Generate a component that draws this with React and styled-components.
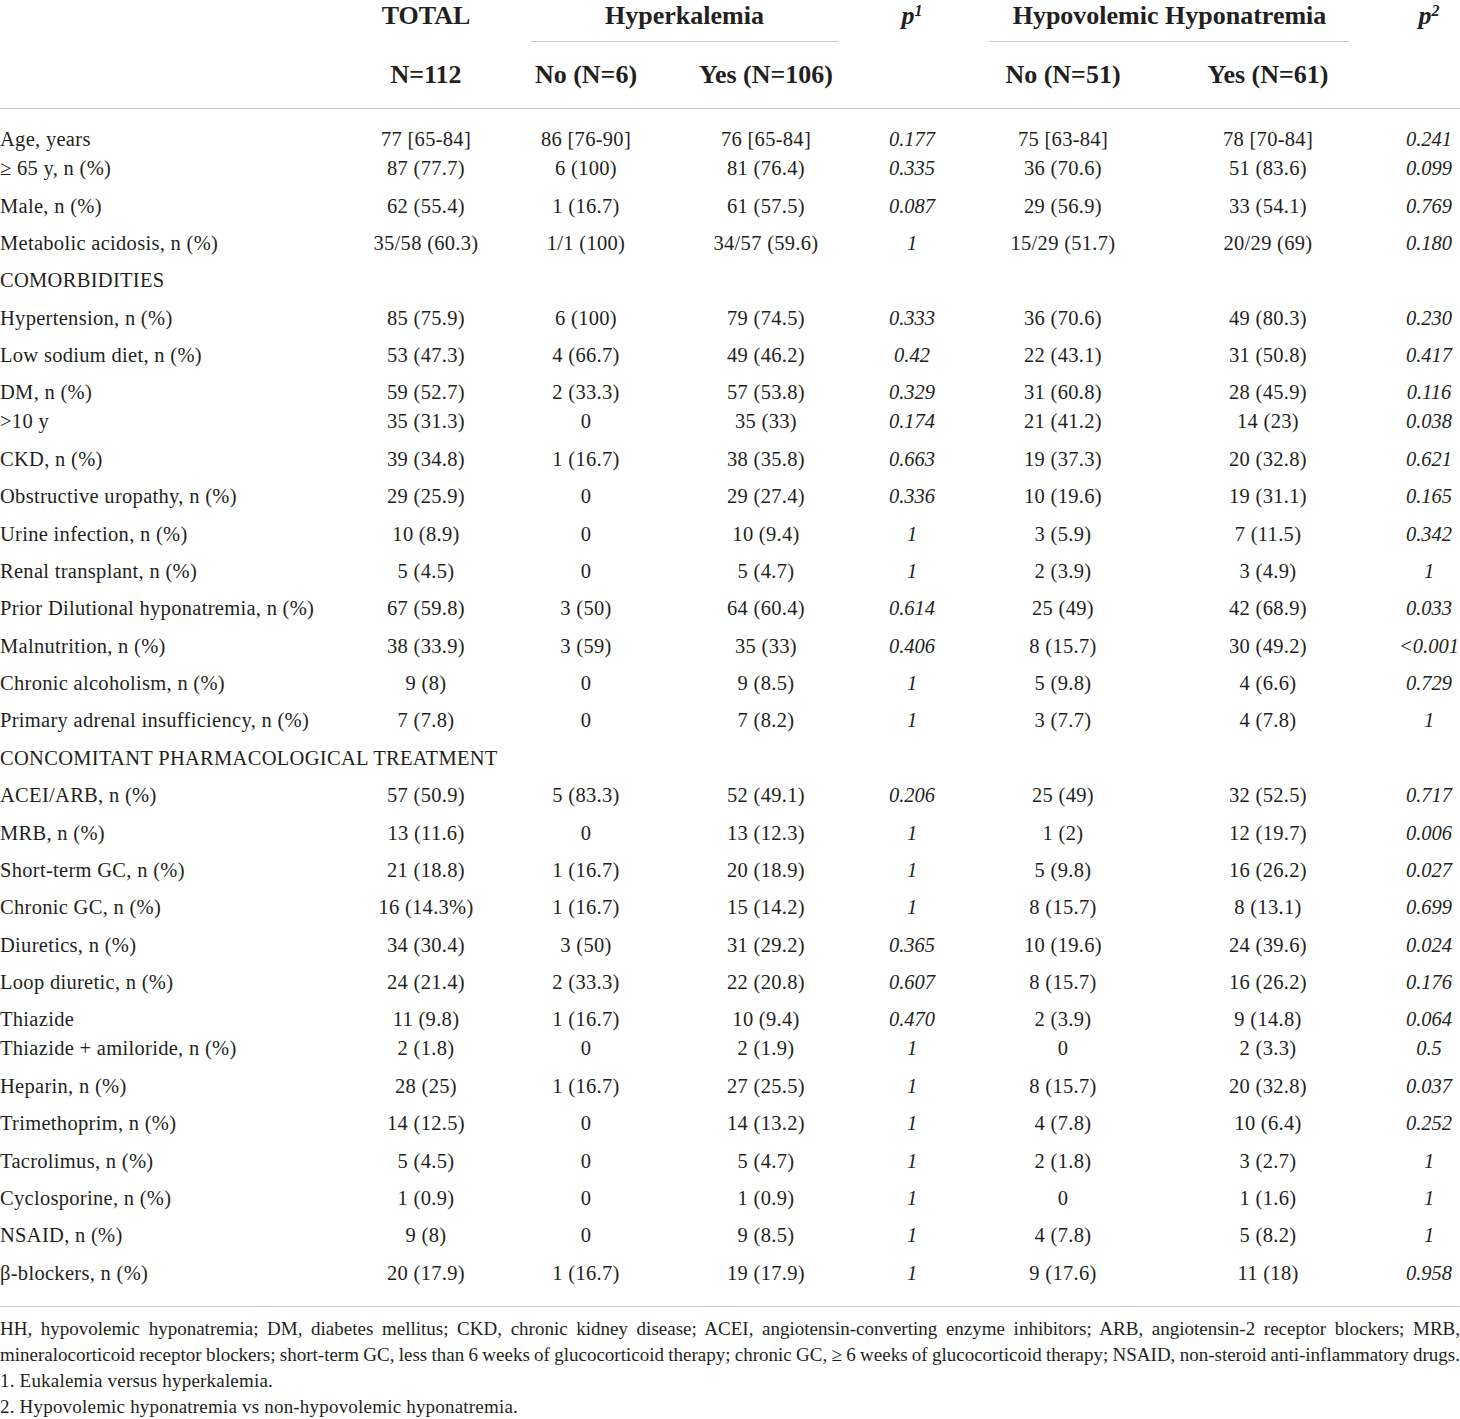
import React from 'react';
import styled, { createGlobalStyle } from 'styled-components';

const GlobalStyle = createGlobalStyle`
  body {
    margin: 0;
    background: #fff;
    color: #231f20;
    font-family: 'Liberation Serif', 'Times New Roman', serif;
  }
`;

const columns = '346px 160px 160px 200px 92px 210px 200px 92px';

const Page = styled.div`
  width: 1460px;
`;

const Head = styled.div`
  display: grid;
  grid-template-columns: ${columns};
  grid-template-rows: 42px 66px;
  border-bottom: 1px solid #c6c6c6;
  font-size: 26px;
  font-weight: bold;
  line-height: 30px;
`;

const HeadCell = styled.div`
  grid-column: ${(p) => p.$col} / span ${(p) => p.$span || 1};
  grid-row: ${(p) => p.$row};
  align-self: ${(p) => (p.$row === 1 ? 'start' : 'center')};
  padding-top: ${(p) => (p.$row === 1 ? '1px' : '0')};
  text-align: center;
  white-space: nowrap;
  padding-left: ${(p) => (p.$col === 8 ? '30px' : '0')};
`;

const Group = styled.div`
  margin: ${(p) => p.$inset};
  height: 40px;
  border-bottom: 1px solid #c6c6c6;
  text-align: center;
`;

const PLabel = styled.span`
  font-style: italic;

  sup {
    font-size: 16px;
    vertical-align: 8px;
    line-height: 0;
  }
`;

const Body = styled.div`
  padding: 12px 0 14px;
  border-bottom: 1px solid #c6c6c6;
  font-size: 20.5px;
  line-height: 29px;
  letter-spacing: 0.3px;
`;

const Row = styled.div`
  display: grid;
  grid-template-columns: ${columns};
  padding-top: ${(p) => (p.$joinTop ? '0' : '4.2px')};
  padding-bottom: ${(p) => (p.$joinBottom ? '0' : '4.2px')};
`;

const Cell = styled.div`
  text-align: center;
  white-space: nowrap;

  &:first-child {
    text-align: left;
  }

  &:nth-child(5),
  &:nth-child(8) {
    font-style: italic;
    letter-spacing: 0;
  }

  &:nth-child(8) {
    padding-left: 30px;
  }
`;

const Section = styled.div`
  grid-column: 1 / -1;
  white-space: nowrap;
`;

const Notes = styled.div`
  margin-top: 9px;
  font-size: 19px;
  line-height: 26px;
`;

const JustLine = styled.div`
  text-align: justify;
  text-align-last: justify;
  white-space: nowrap;
  word-spacing: ${(p) => p.$tight || '0'};
`;

const NoteLine = styled.div`
  letter-spacing: 0.2px;
`;

const rows = [
  ['Age, years', '77 [65-84]', '86 [76-90]', '76 [65-84]', '0.177', '75 [63-84]', '78 [70-84]', '0.241'],
  ['≥ 65 y, n (%)', '87 (77.7)', '6 (100)', '81 (76.4)', '0.335', '36 (70.6)', '51 (83.6)', '0.099', 'join'],
  ['Male, n (%)', '62 (55.4)', '1 (16.7)', '61 (57.5)', '0.087', '29 (56.9)', '33 (54.1)', '0.769'],
  ['Metabolic acidosis, n (%)', '35/58 (60.3)', '1/1 (100)', '34/57 (59.6)', '1', '15/29 (51.7)', '20/29 (69)', '0.180'],
  ['COMORBIDITIES'],
  ['Hypertension, n (%)', '85 (75.9)', '6 (100)', '79 (74.5)', '0.333', '36 (70.6)', '49 (80.3)', '0.230'],
  ['Low sodium diet, n (%)', '53 (47.3)', '4 (66.7)', '49 (46.2)', '0.42', '22 (43.1)', '31 (50.8)', '0.417'],
  ['DM, n (%)', '59 (52.7)', '2 (33.3)', '57 (53.8)', '0.329', '31 (60.8)', '28 (45.9)', '0.116'],
  ['>10 y', '35 (31.3)', '0', '35 (33)', '0.174', '21 (41.2)', '14 (23)', '0.038', 'join'],
  ['CKD, n (%)', '39 (34.8)', '1 (16.7)', '38 (35.8)', '0.663', '19 (37.3)', '20 (32.8)', '0.621'],
  ['Obstructive uropathy, n (%)', '29 (25.9)', '0', '29 (27.4)', '0.336', '10 (19.6)', '19 (31.1)', '0.165'],
  ['Urine infection, n (%)', '10 (8.9)', '0', '10 (9.4)', '1', '3 (5.9)', '7 (11.5)', '0.342'],
  ['Renal transplant, n (%)', '5 (4.5)', '0', '5 (4.7)', '1', '2 (3.9)', '3 (4.9)', '1'],
  ['Prior Dilutional hyponatremia, n (%)', '67 (59.8)', '3 (50)', '64 (60.4)', '0.614', '25 (49)', '42 (68.9)', '0.033'],
  ['Malnutrition, n (%)', '38 (33.9)', '3 (59)', '35 (33)', '0.406', '8 (15.7)', '30 (49.2)', '<0.001'],
  ['Chronic alcoholism, n (%)', '9 (8)', '0', '9 (8.5)', '1', '5 (9.8)', '4 (6.6)', '0.729'],
  ['Primary adrenal insufficiency, n (%)', '7 (7.8)', '0', '7 (8.2)', '1', '3 (7.7)', '4 (7.8)', '1'],
  ['CONCOMITANT PHARMACOLOGICAL TREATMENT'],
  ['ACEI/ARB, n (%)', '57 (50.9)', '5 (83.3)', '52 (49.1)', '0.206', '25 (49)', '32 (52.5)', '0.717'],
  ['MRB, n (%)', '13 (11.6)', '0', '13 (12.3)', '1', '1 (2)', '12 (19.7)', '0.006'],
  ['Short-term GC, n (%)', '21 (18.8)', '1 (16.7)', '20 (18.9)', '1', '5 (9.8)', '16 (26.2)', '0.027'],
  ['Chronic GC, n (%)', '16 (14.3%)', '1 (16.7)', '15 (14.2)', '1', '8 (15.7)', '8 (13.1)', '0.699'],
  ['Diuretics, n (%)', '34 (30.4)', '3 (50)', '31 (29.2)', '0.365', '10 (19.6)', '24 (39.6)', '0.024'],
  ['Loop diuretic, n (%)', '24 (21.4)', '2 (33.3)', '22 (20.8)', '0.607', '8 (15.7)', '16 (26.2)', '0.176'],
  ['Thiazide', '11 (9.8)', '1 (16.7)', '10 (9.4)', '0.470', '2 (3.9)', '9 (14.8)', '0.064'],
  ['Thiazide + amiloride, n (%)', '2 (1.8)', '0', '2 (1.9)', '1', '0', '2 (3.3)', '0.5', 'join'],
  ['Heparin, n (%)', '28 (25)', '1 (16.7)', '27 (25.5)', '1', '8 (15.7)', '20 (32.8)', '0.037'],
  ['Trimethoprim, n (%)', '14 (12.5)', '0', '14 (13.2)', '1', '4 (7.8)', '10 (6.4)', '0.252'],
  ['Tacrolimus, n (%)', '5 (4.5)', '0', '5 (4.7)', '1', '2 (1.8)', '3 (2.7)', '1'],
  ['Cyclosporine, n (%)', '1 (0.9)', '0', '1 (0.9)', '1', '0', '1 (1.6)', '1'],
  ['NSAID, n (%)', '9 (8)', '0', '9 (8.5)', '1', '4 (7.8)', '5 (8.2)', '1'],
  ['β-blockers, n (%)', '20 (17.9)', '1 (16.7)', '19 (17.9)', '1', '9 (17.6)', '11 (18)', '0.958'],
];

const App = () => {
  return (
    <Page>
      <GlobalStyle />
      <Head>
        <HeadCell $col={2} $row={1}>TOTAL</HeadCell>
        <HeadCell $col={2} $row={2}>N=112</HeadCell>
        <HeadCell $col={3} $span={2} $row={1}>
          <Group $inset="0 28px 0 25px">Hyperkalemia</Group>
        </HeadCell>
        <HeadCell $col={3} $row={2}>No (N=6)</HeadCell>
        <HeadCell $col={4} $row={2}>Yes (N=106)</HeadCell>
        <HeadCell $col={5} $row={1}>
          <PLabel>p<sup>1</sup></PLabel>
        </HeadCell>
        <HeadCell $col={6} $span={2} $row={1}>
          <Group $inset="0 19px 0 32px">Hypovolemic Hyponatremia</Group>
        </HeadCell>
        <HeadCell $col={6} $row={2}>No (N=51)</HeadCell>
        <HeadCell $col={7} $row={2}>Yes (N=61)</HeadCell>
        <HeadCell $col={8} $row={1}>
          <PLabel>p<sup>2</sup></PLabel>
        </HeadCell>
      </Head>

      <Body>
        {rows.map((r, i) => {
          const next = rows[i + 1];
          const joinBottom = next && next[8] === 'join';
          const joinTop = r[8] === 'join';
          if (r.length === 1) {
            return (
              <Row key={r[0]}>
                <Section>{r[0]}</Section>
              </Row>
            );
          }
          return (
            <Row key={r[0]} $joinTop={joinTop} $joinBottom={joinBottom}>
              {r.slice(0, 8).map((v, j) => (
                <Cell key={j}>{v}</Cell>
              ))}
            </Row>
          );
        })}
      </Body>

      <Notes>
        <JustLine>
          HH, hypovolemic hyponatremia; DM, diabetes mellitus; CKD, chronic kidney disease; ACEI,
          angiotensin-converting enzyme inhibitors; ARB, angiotensin-2 receptor blockers; MRB,
        </JustLine>
        <JustLine $tight="-1px">
          mineralocorticoid receptor blockers; short-term GC, less than 6 weeks of glucocorticoid
          therapy; chronic GC, ≥ 6 weeks of glucocorticoid therapy; NSAID, non-steroid
          anti-inflammatory drugs.
        </JustLine>
        <NoteLine>1. Eukalemia versus hyperkalemia.</NoteLine>
        <NoteLine>2. Hypovolemic hyponatremia vs non-hypovolemic hyponatremia.</NoteLine>
      </Notes>
    </Page>
  );
};

export default App;
